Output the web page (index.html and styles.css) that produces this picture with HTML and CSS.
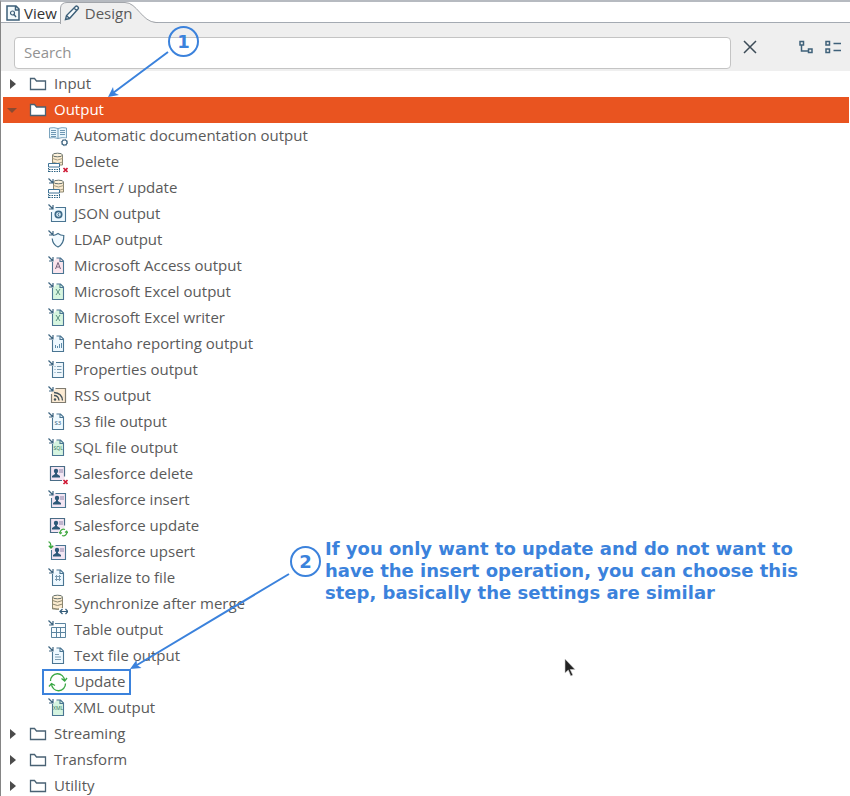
FILE: index.html
```
<!DOCTYPE html>
<html lang="en">
<head>
<meta charset="utf-8">
<title>Design</title>
<link rel="stylesheet" href="styles.css">
</head>
<body>
<svg class="sprite" aria-hidden="true">
  <symbol id="arrow-in" viewBox="0 0 20 22"><path d="M.5 1.500l4 4M5 2v4H1" fill="none" stroke="#3d6480" stroke-width="1.200"/></symbol>
  <symbol id="page" viewBox="0 0 20 22"><path d="M4.500 7v11.500h11V6l-3-3H8.500M12 3v3.500h3.500" stroke="#4a7592" stroke-width="1.100"/></symbol>
  <symbol id="frame" viewBox="0 0 20 22"><path d="M7.500 4.500h10v14h-14V9" stroke="#4a7592" stroke-width="1.100"/></symbol>
  <symbol id="cross" viewBox="0 0 20 22"><path d="M15.500 17l4 4m0-4l-4 4" stroke="#cf1733" stroke-width="1.600"/></symbol>
  <symbol id="table" viewBox="0 0 20 22"><path d="M.5 13v-.500h11v3.500H.500zM.5 16v4.500h11V16" fill="#fff"/><path d="M.5 16v-3.500h11V16z" stroke="#3f7396"/><path d="M1 18.500h11M1 20.500h11M.5 17v4M11.500 17v4" stroke="#2f6585" stroke-dasharray="1.500 1"/></symbol>
  <symbol id="db" viewBox="0 0 20 22"><path d="M4.500 4v10h10V4" fill="#fbebcf" stroke="#8b866f"/><ellipse cx="9.500" cy="4" rx="5" ry="1.800" fill="#fff3dc" stroke="#68736f"/><path d="M4.500 7.500q5 3 10 0M4.500 11q5 3 10 0" fill="none" stroke="#a39c84"/></symbol>
  <symbol id="person" viewBox="0 0 20 22"><path d="M2.500 3.500h14v14h-14z" fill="#f3e6f3"/><circle cx="8" cy="8" r="2.200" fill="#2d5878"/><path d="M7 9h2v2l3 2v1.500H4V13l3-2z" fill="#2d5878"/><path d="M11 7h4M11 9h4" stroke="#8c83a8"/></symbol>
  <symbol id="folder" viewBox="0 0 18 14"><path d="M1.500 12.500V1.500h4l2 2.500h9v8.500z" stroke="#496274" stroke-width="1.300"/></symbol>
  <symbol id="i-doc" viewBox="0 0 20 22"><path d="M10 3.500Q6 2 1.500 3v10q4.500-1 8.500.500 4-1.500 8.500-.500V3Q14 2 10 3.500z" fill="#e9f6fc" stroke="#7ba4be"/><path d="M10 3.500v10M3 5.500h5M3 7.500h5M3 9.500h5M3 11.500h5M12 5.500h5M12 7.500h5M12 9.500h5" stroke="#6f97b3"/><circle cx="16.500" cy="17.500" r="4.200" fill="#fff"/><circle cx="16.500" cy="17.500" r="2.500" fill="#fff" stroke="#416782" stroke-width="1.200"/><circle cx="16.500" cy="17.500" r="3.200" stroke="#416782" stroke-dasharray="1 1.500"/></symbol>
  <symbol id="i-delete" viewBox="0 0 20 22"><use href="#db"/><use href="#table"/><use href="#cross"/></symbol>
  <symbol id="i-insert" viewBox="0 0 20 22"><use href="#db" x="1" y="1"/><use href="#table"/><use href="#arrow-in"/></symbol>
  <symbol id="i-json" viewBox="0 0 20 22"><path d="M4 5h13v13H4z" fill="#eef9ff"/><use href="#frame"/><circle cx="10.500" cy="11.500" r="3.200" fill="#d8ecf7" stroke="#3d6a88" stroke-width="1.700"/><path d="M11 10q-2 1.500 0 3" stroke="#3d6a88"/><use href="#arrow-in"/></symbol>
  <symbol id="i-ldap" viewBox="0 0 20 22"><path d="M5 6.500Q8 6 10 4.500 12.500 6.500 15.800 6.500C16 12 14 16 10 18 6.500 16.500 4.500 13 4.200 9.500" fill="#f2faff" stroke="#426e8a" stroke-width="1.200"/><use href="#arrow-in"/></symbol>
  <symbol id="i-access" viewBox="0 0 20 22"><path d="M5 7l4-4h4l3 3v12H5z" fill="#fbe5ed"/><use href="#page"/><path d="M7.500 14l2.500-6.500 2.500 6.500M8.500 12h3" stroke="#76607a"/><use href="#arrow-in"/></symbol>
  <symbol id="i-excel" viewBox="0 0 20 22"><path d="M5 7l4-4h4l3 3v12H5z" fill="#d6f5df"/><use href="#page"/><path d="M8 8l4 6m0-6l-4 6" stroke="#5b9080"/><use href="#arrow-in"/></symbol>
  <symbol id="i-report" viewBox="0 0 20 22"><path d="M5 7l4-4h4l3 3v12H5z" fill="#edf8ff"/><use href="#page"/><path d="M7.500 15v-3M9.500 15v-2M11.500 15v-4M13.500 15v-5" stroke="#5d8ba9"/><use href="#arrow-in"/></symbol>
  <symbol id="i-props" viewBox="0 0 20 22"><path d="M4.500 7v11.500h11v-15H8" fill="#f0f8fd" stroke="#4a7592" stroke-width="1.100"/><path d="M6.500 7.500h1M6.500 10.500h1M6.500 13.500h1M9 7.500h4.500M9 10.500h4.500M9 13.500h4.500" stroke="#7d9db2"/><use href="#arrow-in"/></symbol>
  <symbol id="i-rss" viewBox="0 0 20 22"><path d="M3.500 7l4-3h10v14h-14z" fill="#fcebd4"/><path d="M7.500 3.500h10v14h-14V9" stroke="#7f7b70" stroke-width="1.200"/><circle cx="7" cy="14.500" r="1.200" fill="#44545d"/><path d="M6 10.500q4.500 0 5 5M6 7.500q8 .500 8.500 8" stroke="#44545d" stroke-width="1.300"/><use href="#arrow-in"/></symbol>
  <symbol id="i-s3" viewBox="0 0 20 22"><path d="M5 7l4-4h4l3 3v12H5z" fill="#f0faff"/><use href="#page"/><text x="6.500" y="14" font-size="6" fill="#315e7d">S3</text><use href="#arrow-in"/></symbol>
  <symbol id="i-sql" viewBox="0 0 20 22"><path d="M5 7l4-4h4l3 3v12H5z" fill="#d5f4e0"/><use href="#page"/><text x="5.500" y="13" font-size="5" fill="#36785f">SQL</text><use href="#arrow-in"/></symbol>
  <symbol id="i-sfdelete" viewBox="0 0 20 22"><use href="#person"/><path d="M14 17.500H2.500v-14h14v10" stroke="#4a6c86" stroke-width="1.200"/><use href="#cross"/></symbol>
  <symbol id="i-sfinsert" viewBox="0 0 20 22"><use href="#person" x="1" y="1"/><use href="#frame"/><use href="#arrow-in"/></symbol>
  <symbol id="i-sfupdate" viewBox="0 0 20 22"><use href="#person"/><path d="M10 17.500H2.500v-14h14v7" stroke="#4a6c86" stroke-width="1.200"/><circle cx="15.500" cy="17.500" r="4.500" fill="#fff"/><path d="M12.300 18.500A3.400 3.400 0 0 1 17 14.500M18.700 16.500A3.400 3.400 0 0 1 14 20.500M11 17l1.300 1.700L14 17.500M17 17.500l1.700-1.300L20 18" stroke="#43aa43" stroke-width="1.200"/></symbol>
  <symbol id="i-sfupsert" viewBox="0 0 20 22"><use href="#person" x="1" y="1"/><use href="#frame"/><path d="M.5 .800q2.500 0 2.500 6M.8 4.800L3 7l2.200-2.200" stroke="#38a63b" stroke-width="1.300"/></symbol>
  <symbol id="i-serial" viewBox="0 0 20 22"><path d="M5 7l4-4h4l3 3v12H5z" fill="#edf8ff"/><use href="#page"/><path d="M8.500 8v6M11.500 8v6M7 9.500h6M7 12.500h6" stroke="#7d9bb0"/><use href="#arrow-in"/></symbol>
  <symbol id="i-sync" viewBox="0 0 20 22"><path d="M4.500 4v12h10V4" fill="#fbebcf" stroke="#8b866f"/><ellipse cx="9.500" cy="4" rx="5" ry="1.800" fill="#fff3dc" stroke="#68736f"/><path d="M4.500 7.500q5 3 10 0M4.500 11q5 3 10 0M4.500 15q5 3 10 0" stroke="#8b866f"/><path d="M11 15h9v7h-9z" fill="#fff"/><path d="M12.500 18.500h7M14.500 16l-2.500 2.500 2.500 2.500M17.500 16l2.500 2.500-2.500 2.500" stroke="#325b79" stroke-width="1.200"/></symbol>
  <symbol id="i-table" viewBox="0 0 20 22"><path d="M7 4.500h10.500v14h-14V8.500h14M3.500 13.500h14M8.500 8.500v10M12.500 8.500v10" fill="#f7fcff" stroke="#5b849f"/><use href="#arrow-in"/></symbol>
  <symbol id="i-text" viewBox="0 0 20 22"><path d="M5 7l4-4h4l3 3v12H5z" fill="#edf8ff"/><use href="#page"/><path d="M7 9.500h4M7 12h6M7 14.500h6" stroke="#7d9db2"/><use href="#arrow-in"/></symbol>
  <symbol id="i-update" viewBox="0 0 20 22"><path d="M2.500 10A7 7 0 0 1 16.500 9.500M17.500 12.500A7 7 0 0 1 3.500 13M13.500 7.500l3.200 2.500L19 7M1 15.500l2.500-3 3.500 2" stroke="#3aa845" stroke-width="1.300"/></symbol>
  <symbol id="i-xml" viewBox="0 0 20 22"><path d="M5 7l4-4h4l3 3v12H5z" fill="#d5f4e0"/><use href="#page"/><text x="5" y="13" font-size="5" fill="#36785f">XML</text><use href="#arrow-in"/></symbol>
</svg>
<main class="window">
  <div class="tabs" role="tablist">
    <button class="tab" role="tab" type="button"><svg class="tab-icon" viewBox="0 0 16 18"><path d="M2 2h9l3 3v11H2zM10.500 2v4H14" fill="#f3fafc" stroke="#3c5f78" stroke-width="1.500"/><circle cx="7.500" cy="9" r="2" stroke="#3c5f78" stroke-width="1.200"/><path d="M9 10.500l2 2.500" stroke="#3c5f78" stroke-width="1.300"/></svg>View</button>
    <button class="tab active" role="tab" type="button" aria-selected="true"><svg class="tab-shape" viewBox="0 0 98 22" aria-hidden="true"><path d="M.5 22V6Q1 .5 7 .5H65C77 .5 82 20 96 20.500L98 22z" fill="#efefef"/><path d="M.5 22V6Q1 .5 7 .5H65C77 .5 82 20 96 20.500H98" stroke="#a2a5aa"/></svg><svg class="tab-icon" viewBox="0 0 16 18"><path d="M1.500 15.500l1-4L11.500 2.500q1-1 2 0l.500.500q1 1 0 2L5.500 14.500zM2.500 11.500l3 3M10 4l3 3" fill="#f7fbfd" stroke="#3c5f78" stroke-width="1.400"/></svg><span>Design</span></button>
  </div>
  <div class="toolbar">
    <input class="search" type="text" placeholder="Search" aria-label="Search">
    <button class="tool clear" type="button" aria-label="Clear"><svg width="16" height="16" viewBox="0 0 16 16"><path d="M2 2l12 12M14 2L2 14" stroke="#3c4b57" stroke-width="1.500"/></svg></button>
    <button class="tool" type="button" aria-label="Expand all"><svg width="16" height="14" viewBox="0 0 16 14"><path d="M2 1.500h3.500V5H2zM10.500 9H14v3.500h-3.500zM3.500 5v6h7" stroke="#3f617a" stroke-width="1.500"/></svg></button>
    <button class="tool" type="button" aria-label="Collapse all"><svg width="18" height="14" viewBox="0 0 18 14"><path d="M2 1.500h3.500V5H2zM2 9h3.500v3.500H2z" stroke="#3f617a" stroke-width="1.500"/><path d="M9.500 3.500H17M9.500 10.500H17" stroke="#3f617a" stroke-width="1.300"/></svg></button>
  </div>
  <ul class="tree" role="tree">
    <li><div class="row"><button class="toggle" type="button" aria-label="Expand Input"></button><svg class="folder"><use href="#folder"/></svg><span>Input</span></div></li>
    <li><div class="row selected"><button class="toggle open" type="button" aria-label="Collapse Output"></button><svg class="folder"><use href="#folder"/></svg><span>Output</span></div>
      <ul class="steps">
        <li class="step"><svg class="icon"><use href="#i-doc"/></svg>Automatic documentation output</li>
        <li class="step"><svg class="icon"><use href="#i-delete"/></svg>Delete</li>
        <li class="step"><svg class="icon"><use href="#i-insert"/></svg>Insert / update</li>
        <li class="step"><svg class="icon"><use href="#i-json"/></svg>JSON output</li>
        <li class="step"><svg class="icon"><use href="#i-ldap"/></svg>LDAP output</li>
        <li class="step"><svg class="icon"><use href="#i-access"/></svg>Microsoft Access output</li>
        <li class="step"><svg class="icon"><use href="#i-excel"/></svg>Microsoft Excel output</li>
        <li class="step"><svg class="icon"><use href="#i-excel"/></svg>Microsoft Excel writer</li>
        <li class="step"><svg class="icon"><use href="#i-report"/></svg>Pentaho reporting output</li>
        <li class="step"><svg class="icon"><use href="#i-props"/></svg>Properties output</li>
        <li class="step"><svg class="icon"><use href="#i-rss"/></svg>RSS output</li>
        <li class="step"><svg class="icon"><use href="#i-s3"/></svg>S3 file output</li>
        <li class="step"><svg class="icon"><use href="#i-sql"/></svg>SQL file output</li>
        <li class="step"><svg class="icon"><use href="#i-sfdelete"/></svg>Salesforce delete</li>
        <li class="step"><svg class="icon"><use href="#i-sfinsert"/></svg>Salesforce insert</li>
        <li class="step"><svg class="icon"><use href="#i-sfupdate"/></svg>Salesforce update</li>
        <li class="step"><svg class="icon"><use href="#i-sfupsert"/></svg>Salesforce upsert</li>
        <li class="step"><svg class="icon"><use href="#i-serial"/></svg>Serialize to file</li>
        <li class="step"><svg class="icon"><use href="#i-sync"/></svg>Synchronize after merge</li>
        <li class="step"><svg class="icon"><use href="#i-table"/></svg>Table output</li>
        <li class="step"><svg class="icon"><use href="#i-text"/></svg>Text file output</li>
        <li class="step marked"><svg class="icon"><use href="#i-update"/></svg>Update</li>
        <li class="step"><svg class="icon"><use href="#i-xml"/></svg>XML output</li>
      </ul>
    </li>
    <li><div class="row"><button class="toggle" type="button" aria-label="Expand Streaming"></button><svg class="folder"><use href="#folder"/></svg><span>Streaming</span></div></li>
    <li><div class="row"><button class="toggle" type="button" aria-label="Expand Transform"></button><svg class="folder"><use href="#folder"/></svg><span>Transform</span></div></li>
    <li><div class="row"><button class="toggle" type="button" aria-label="Expand Utility"></button><svg class="folder"><use href="#folder"/></svg><span>Utility</span></div></li>
  </ul>
  <svg class="arrows" viewBox="0 0 340 700" aria-hidden="true"><path d="M168 52L113 93M289 574L137 665" stroke="#3b82dc" stroke-width="2"/><path d="M108 97l5-10 1 5.500 5 2.500zM130 669l6.500-9 .5 5 4.500 3z" fill="#3b82dc"/></svg>
  <span class="badge one">1</span>
  <span class="badge two">2</span>
  <p class="note">If you only want to update and do not want to<br>have the insert operation, you can choose this<br>step, basically the settings are similar</p>
  <svg class="pointer" viewBox="0 0 12 19" aria-hidden="true"><path d="M1 1v14l3.300-3 2.500 6 2-1-2.600-5.500H11z" fill="#222" stroke="#ccc" stroke-width=".6"/></svg>
</main>
</body>
</html>
```
FILE: styles.css
```
* { box-sizing: border-box; }

body {
  margin: 0;
  background: #fff;
  color: #5a5a5a;
  font: 15px/24px "Open Sans", "Noto Sans", sans-serif;
}

svg { fill: none; flex: none; }
ul { margin: 0; padding: 0; list-style: none; }
button { padding: 0; border: 0; background: none; color: inherit; font: inherit; }

.sprite { display: none; }

.window {
  position: relative;
  height: 100vh;
  overflow: hidden;
  border-left: 1px solid #858585;
  border-top: 2px solid #b6bac0;
}

.tabs {
  display: flex;
  height: 21px;
  border-bottom: 1px solid #a4aab2;
}
.tab {
  display: flex;
  align-items: center;
  gap: 3px;
  height: 21px;
  padding-left: 4px;
  color: #333;
}
.tab-icon { width: 16px; height: 18px; }
.tab.active {
  position: relative;
  gap: 5px;
  margin-left: 3px;
  padding-left: 4px;
  color: #5a5a5a;
}
.tab.active > * { position: relative; }
.tab.active .tab-shape { position: absolute; left: 0; top: 0; width: 98px; height: 22px; }

.toolbar {
  display: flex;
  align-items: flex-start;
  height: 48px;
  padding: 14px 8px 0 13px;
  background: #efefef;
}
.search {
  flex: 1;
  min-width: 0;
  height: 32px;
  padding: 0 9px 2px;
  border: 1px solid #c4c4c4;
  border-radius: 4px;
  background: #fff;
  color: #5a5a5a;
  font: inherit;
}
.search::placeholder { color: #929292; opacity: 1; }
.tool { display: flex; height: 20px; align-items: center; margin-left: 10px; }
.clear { margin: 0 30px 0 11px; }

.tree { margin-left: 2px; margin-right: 1px; }
.row { display: flex; align-items: center; height: 26px; }
.row span { margin-left: 7px; padding-bottom: 2px; }
.toggle { width: 18px; height: 18px; margin-right: 8px; }
.toggle::before {
  content: "";
  display: block;
  margin-left: 7px;
  width: 0;
  border: 5px solid transparent;
  border-left: 6px solid #4b4b4b;
  border-right: 0;
}
.toggle.open::before {
  margin-left: 4px;
  border: 5px solid transparent;
  border-top-color: #8b4a31;
  border-bottom: 0;
}
.folder { width: 18px; height: 14px; }
.selected { background: #e95420; color: #fff; }
.selected .folder { fill: #fff; }

.steps { padding-left: 39px; }
.step {
  display: flex;
  align-items: flex-start;
  gap: 6px;
  width: fit-content;
  height: 26px;
  padding: 0 6px;
}
.icon { width: 20px; height: 22px; margin-top: 2px; font-family: "Noto Sans", sans-serif; }
.marked { outline: 2px solid #3b82dc; outline-offset: -2px; }

.arrows { position: absolute; left: -1px; top: -2px; width: 340px; height: 700px; }
.badge {
  position: absolute;
  width: 31px;
  height: 31px;
  border: 2px solid #3b82dc;
  border-radius: 50%;
  color: #3b82dc;
  font: bold 18px/27px "DejaVu Sans", sans-serif;
  text-align: center;
}
.one { left: 167px; top: 24px; }
.two { left: 289px; top: 544px; }
.note {
  position: absolute;
  left: 324px;
  top: 536px;
  margin: 0;
  color: #3b82dc;
  font: bold 18px/22px "DejaVu Sans", sans-serif;
  white-space: nowrap;
}
.pointer { position: absolute; left: 563px; top: 656px; width: 12px; height: 19px; }
```
